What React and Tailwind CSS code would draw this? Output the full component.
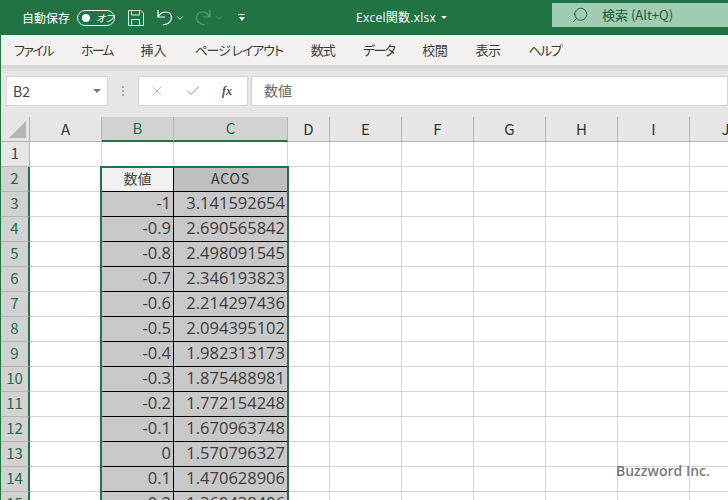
import React from "react";
import { ChevronDown, Search, X, Check } from "lucide-react";

const tabs = [
  { label: "ファイル", track: "tracking-[-1.5px]" },
  { label: "ホーム", track: "tracking-[-1.9px]" },
  { label: "挿入", track: "" },
  { label: "ページ レイアウト", track: "tracking-[-1.1px]" },
  { label: "数式", track: "tracking-[-1px]" },
  { label: "データ", track: "tracking-[-1.6px]" },
  { label: "校閲", track: "tracking-[-0.5px]" },
  { label: "表示", track: "tracking-[-0.5px]" },
  { label: "ヘルプ", track: "tracking-[-1.5px]" },
];
const columns = ["A", "B", "C", "D", "E", "F", "G", "H", "I", "J"];
const rows = [
  ["-1", "3.141592654"],
  ["-0.9", "2.690565842"],
  ["-0.8", "2.498091545"],
  ["-0.7", "2.346193823"],
  ["-0.6", "2.214297436"],
  ["-0.5", "2.094395102"],
  ["-0.4", "1.982313173"],
  ["-0.3", "1.875488981"],
  ["-0.2", "1.772154248"],
  ["-0.1", "1.670963748"],
  ["0", "1.570796327"],
  ["0.1", "1.470628906"],
  ["0.2", "1.369438406"],
];

const gridCols = "grid grid-cols-[29px_72px_72px_114px_42px_72px_72px_72px_72px_72px_72px_72px]";

function SaveIcon() {
  return (
    <svg width="16" height="16" viewBox="0 0 16 16" fill="none" stroke="currentColor" strokeWidth="1">
      <path d="M.5.5h12.5l2.5 2.5v12.5H.5z" />
      <path d="M3.5.5v4.5h8V.5M3.5 15.5V9.5h8v6" />
    </svg>
  );
}

function UndoIcon({ className }) {
  return (
    <svg className={className} width="17" height="17" viewBox="0 0 17 17" fill="none" stroke="currentColor" strokeWidth="1.2">
      <path d="M2 1v7h7M2 8C4 4 7 3 10 3c3.5 0 5.5 2.5 5.5 5.5 0 3.5-3 6.5-8.5 7.5" />
    </svg>
  );
}

function SheetRow({ num, children }) {
  return (
    <div className={`${gridCols} h-[25px]`}>
      <div className={`flex items-center justify-center pb-[3px] text-[15px] leading-none border-b border-[#b5b5b5] ${num > 1 ? "bg-[#d2d2d2] text-[#1f6e43] border-r-2 border-r-[#217346]" : "bg-[#e6e6e6] text-[#444] border-r border-r-[#b5b5b5]"}`}>
        {num}
      </div>
      {children}
    </div>
  );
}

function Blank() {
  return <div className="border-r border-b border-[#d4d4d4]" />;
}

function BlankTail() {
  return (
    <>
      <Blank />
      <Blank />
      <Blank />
      <Blank />
      <Blank />
      <Blank />
      <Blank />
      <Blank />
    </>
  );
}

export default function App() {
  return (
    <div className="relative w-[728px] h-[500px] overflow-hidden bg-white font-['Noto_Sans_CJK_JP','Noto_Sans',sans-serif] [font-feature-settings:'palt']">
      {/* title bar */}
      <div className="flex items-center h-[35px] bg-[#217346] text-white">
        <span className="ml-[22px] text-xs">自動保存</span>
        <div className="ml-[7px] flex items-center w-[38px] h-4 rounded-full border border-white">
          <span className="ml-[4px] w-2 h-2 rounded-full bg-white" />
          <span className="ml-[6px] text-[10px] italic leading-none">オフ</span>
        </div>
        <div className="ml-[13px] text-[#e6f0ea]">
          <SaveIcon />
        </div>
        <UndoIcon className="ml-[12px]" />
        <ChevronDown className="ml-[2px] w-[10px] h-[10px]" strokeWidth={2} />
        <UndoIcon className="ml-[10px] -scale-x-100 text-[#5d9b79]" />
        <ChevronDown className="ml-[2px] w-[10px] h-[10px] text-[#5d9b79]" strokeWidth={2} />
        <div className="ml-[14px] flex flex-col items-center">
          <span className="w-[7px] h-px bg-white" />
          <span className="mt-[2px] w-0 h-0 border-x-[3px] border-x-transparent border-t-[4px] border-t-white" />
        </div>
        <span className="ml-[111px] text-xs tracking-[0.25px] font-['Open_Sans','Noto_Sans_CJK_JP',sans-serif]">Excel関数.xlsx</span>
        <span className="ml-[5px] w-0 h-0 border-x-[3px] border-x-transparent border-t-[3px] border-t-white" />
        <div className="ml-auto flex items-center w-[176px] h-6 mb-[5px] bg-[#a0cdb2] text-[#1d5c3a]">
          <Search className="ml-[19px] w-[18px] h-[18px] -scale-x-100" strokeWidth={1.25} />
          <span className="ml-[13px] text-[13px]">検索 (Alt+Q)</span>
        </div>
      </div>

      {/* left edge of the window */}
      <div className="border-l border-[#217346]">
        <div className="flex items-center gap-[28px] h-[30px] pl-[13px] bg-[#f3f2f1] text-[13px] text-[#3b3a39]">
          {tabs.map((tab) => (
            <span key={tab.label} className={tab.track}>{tab.label}</span>
          ))}
        </div>

        {/* formula bar */}
        <div className="h-[52px] bg-gradient-to-b from-[#d4d4d4] from-0% via-[#e6e6e6] via-15% to-[#e6e6e6]">
          <div className="flex items-start pt-[11px] pl-[5px]">
            <div className="flex items-center justify-between w-[102px] h-[30px] pl-[6px] pr-[6px] bg-white border border-[#d4d4d4] text-sm text-[#444]">
              B2
              <span className="w-0 h-0 border-x-[4px] border-x-transparent border-t-[4px] border-t-[#777]" />
            </div>
            <div className="ml-[14px] flex flex-col gap-[2px] mt-[10px]">
              <span className="w-[2px] h-[2px] bg-[#aaa]" />
              <span className="w-[2px] h-[2px] bg-[#aaa]" />
              <span className="w-[2px] h-[2px] bg-[#aaa]" />
            </div>
            <div className="ml-[14px] flex items-center w-[110px] h-[30px] bg-white border border-[#d4d4d4]">
              <X className="ml-[10px] w-4 h-4 text-[#c0c0c0]" strokeWidth={1.5} />
              <Check className="ml-[20px] w-4 h-4 text-[#c0c0c0]" strokeWidth={2} />
              <span className="ml-[21px] text-xs italic font-bold text-[#555] font-['Liberation_Serif',serif]">fx</span>
            </div>
            <div className="ml-[3px] flex items-center flex-1 h-[30px] pl-[12px] pb-[2px] bg-white border border-[#d4d4d4] text-sm text-[#666]">
              数値
            </div>
          </div>
        </div>

        {/* sheet */}
        <div className="text-[#333]">
          <div className={`${gridCols} h-[25px] bg-[#e6e6e6] text-[15px] leading-none`}>
            <div className="relative border-r border-b border-[#b5b5b5]">
              <span className="absolute right-[3px] bottom-[3px] w-0 h-0 border-l-[17px] border-l-transparent border-b-[17px] border-b-[#b5b5b5]" />
            </div>
            {columns.map((col) => {
              const selected = col === "B" || col === "C";
              return (
                <div
                  key={col}
                  className={`flex items-center justify-center pb-[2px] border-r ${selected ? "bg-[#d2d2d2] text-[#1f6e43] border-b-2 border-b-[#217346] border-r-[#b5b5b5]" : "border-b border-[#b5b5b5]"}`}
                >
                  {col}
                </div>
              );
            })}
          </div>

          <SheetRow num={1}>
            <Blank />
            <Blank />
            <Blank />
            <BlankTail />
          </SheetRow>

          <SheetRow num={2}>
            <Blank />
            <div className="flex items-center justify-center pb-[3px] leading-none bg-[#f2f2f2] border-r border-b border-black text-sm text-[#444]">数値</div>
            <div className="flex items-center justify-center pb-[2px] leading-none bg-[#bfbfbf] border-r border-b border-black text-sm tracking-[0.8px]">ACOS</div>
            <BlankTail />
          </SheetRow>

          {rows.map((row, i) => (
            <SheetRow key={row[1]} num={i + 3}>
              <Blank />
              <div className="flex items-center justify-end pr-[2px] pb-[1px] bg-[#c8c8c8] border-r border-b border-black text-[16.5px] text-[#3c3c3c] leading-none font-['Open_Sans',sans-serif]">{row[0]}</div>
              <div className="flex items-center justify-end pr-[2px] pb-[1px] bg-[#c8c8c8] border-r border-b border-black text-[16.5px] text-[#3c3c3c] leading-none font-['Open_Sans',sans-serif]">{row[1]}</div>
              <BlankTail />
            </SheetRow>
          ))}
        </div>
      </div>

      {/* selection outline */}
      <div className="absolute left-[100px] top-[166px] w-[189px] h-[400px] border-2 border-[#217346] pointer-events-none" />
      <span className="absolute left-[616px] top-[461px] text-sm font-['Open_Sans',sans-serif] font-semibold text-[#555]/80">Buzzword Inc.</span>
    </div>
  );
}
